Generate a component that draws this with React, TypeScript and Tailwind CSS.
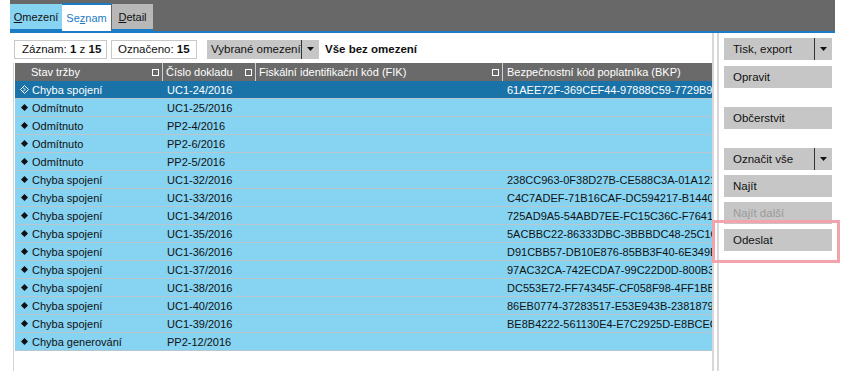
import React from 'react';

type Row = { stav: string; cislo: string; bkp: string };

const rows: Row[] = [
    { stav: 'Chyba spojení', cislo: 'UC1-24/2016', bkp: '61AEE72F-369CEF44-97888C59-7729B93E-' },
    { stav: 'Odmítnuto', cislo: 'UC1-25/2016', bkp: '' },
    { stav: 'Odmítnuto', cislo: 'PP2-4/2016', bkp: '' },
    { stav: 'Odmítnuto', cislo: 'PP2-6/2016', bkp: '' },
    { stav: 'Odmítnuto', cislo: 'PP2-5/2016', bkp: '' },
    { stav: 'Chyba spojení', cislo: 'UC1-32/2016', bkp: '238CC963-0F38D27B-CE588C3A-01A121D' },
    { stav: 'Chyba spojení', cislo: 'UC1-33/2016', bkp: 'C4C7ADEF-71B16CAF-DC594217-B14408C' },
    { stav: 'Chyba spojení', cislo: 'UC1-34/2016', bkp: '725AD9A5-54ABD7EE-FC15C36C-F76410D' },
    { stav: 'Chyba spojení', cislo: 'UC1-35/2016', bkp: '5ACBBC22-86333DBC-3BBBDC48-25C1C90' },
    { stav: 'Chyba spojení', cislo: 'UC1-36/2016', bkp: 'D91CBB57-DB10E876-85BB3F40-6E349E56' },
    { stav: 'Chyba spojení', cislo: 'UC1-37/2016', bkp: '97AC32CA-742ECDA7-99C22D0D-800B361' },
    { stav: 'Chyba spojení', cislo: 'UC1-38/2016', bkp: 'DC553E72-FF74345F-CF058F98-4FF1BBC2' },
    { stav: 'Chyba spojení', cislo: 'UC1-40/2016', bkp: '86EB0774-37283517-E53E943B-23818798-' },
    { stav: 'Chyba spojení', cislo: 'UC1-39/2016', bkp: 'BE8B4222-561130E4-E7C2925D-E8BCEC82' },
    { stav: 'Chyba generování', cislo: 'PP2-12/2016', bkp: '' },
];

const font = { fontFamily: '"Liberation Sans", Tahoma, sans-serif' };

// small square glyph in header cells
const HeadBox = () => <span className="w-[7px] h-[7px] border border-white shrink-0" />;

const Arrow = () => (
    <svg width="7" height="4" viewBox="0 0 7 4">
        <path d="M0 0h7L3.5 4z" fill="#111" />
    </svg>
);

function ToolButton({ label, split, disabled }: { label: string; split?: boolean; disabled?: boolean }) {
    return (
        <div className="flex h-[22px] w-[108px] bg-[#c6c6c6] items-center">
            <span className={`flex-1 pl-[9px] whitespace-nowrap ${disabled ? 'text-[#9a9a9a]' : 'text-[#111]'}`}>{label}</span>
            {split && (
                <>
                    <span className="w-px h-[22px] bg-[#333]" />
                    <span className="w-[17px] flex justify-center"><Arrow /></span>
                </>
            )}
        </div>
    );
}

export default function App() {
    return (
        <div className="w-[850px] h-[371px] bg-white relative overflow-hidden text-[11px] leading-[14px]" style={font}>
            <div className="ml-[10px] w-[825px]">
                {/* Tabs bar */}
                <div className="h-[31px] bg-[#686868] flex items-end pt-[4px]">
                    <div className="h-[27px] w-[52px] bg-[#87d3f2] border-b-2 border-[#1a7cc4] flex items-center justify-center text-[#111]">
                        <span><u>O</u>mezení</span>
                    </div>
                    <div className="h-[28px] w-[49px] bg-white border-t-2 border-[#1a7cc4] flex items-center justify-center text-[#1a7cc4]">
                        <span>Se<u>z</u>nam</span>
                    </div>
                    <div className="h-[27px] w-[41px] bg-[#b8b8b8] border-b-2 border-[#1a7cc4] flex items-center justify-center text-[#111] ml-px">
                        <span><u>D</u>etail</span>
                    </div>
                </div>
                <div className="h-[2px] bg-[#1a7cc4]" />

                {/* Body */}
                <div className="flex h-[338px]">
                    {/* Left section */}
                    <div className="w-[702px] flex flex-col">
                        <div className="flex items-center h-[24px] mt-[4px] pl-[4px] whitespace-nowrap text-[11.5px]">
                            <div className="h-[19px] w-[93px] border border-[#c8c8c8] flex items-center pl-[7px] text-[#111]">
                                Záznam:&nbsp;<b>1</b>&nbsp;z&nbsp;<b>15</b>
                            </div>
                            <div className="h-[19px] w-[86px] border border-[#c8c8c8] flex items-center pl-[6px] ml-[4px] text-[#111]">
                                Označeno:&nbsp;<b>15</b>
                            </div>
                            <div className="h-[19px] w-[112px] bg-[#c6c6c6] flex items-center ml-[10px]">
                                <span className="flex-1 pl-[4px] text-[#111]">Vybrané omezení</span>
                                <span className="w-px h-[19px] bg-[#333]" />
                                <span className="w-[17px] flex justify-center"><Arrow /></span>
                            </div>
                            <span className="ml-[6px] font-bold text-[#111]">Vše bez omezení</span>
                        </div>

                        <div className="flex-1 ml-[3px] border-l border-[#d4d4d4] mt-[2px] flex flex-col">
                            {/* Header */}
                            <div className="flex h-[18px] bg-[#6a6a6a] text-white ml-px whitespace-nowrap">
                                <div className="w-[148px] flex items-center pl-[16px] pr-[3px] border-r border-[#cfcfcf]">
                                    <span className="flex-1">Stav tržby</span><HeadBox />
                                </div>
                                <div className="w-[93px] flex items-center pl-[3px] pr-[3px] border-r border-[#cfcfcf]">
                                    <span className="flex-1">Číslo dokladu</span><HeadBox />
                                </div>
                                <div className="w-[247px] flex items-center pl-[3px] pr-[3px] border-r border-[#cfcfcf]">
                                    <span className="flex-1">Fiskální identifikační kód (FIK)</span><HeadBox />
                                </div>
                                <div className="flex-1 flex items-center pl-[4px]">
                                    <span>Bezpečnostní kód poplatníka (BKP)</span>
                                </div>
                            </div>

                            {/* Rows */}
                            {rows.map((r, i) => {
                                const sel = i === 0;
                                return (
                                    <div
                                        key={i}
                                        className={`flex h-[18px] ml-px border-b border-[#b8c6ce] ${sel ? 'bg-[#1a73a8] text-white' : 'bg-[#87d3f2] text-[#111]'}`}
                                    >
                                        <div className="w-[148px] flex items-center pl-[3px] overflow-hidden whitespace-nowrap">
                                            <span className="w-[13px] flex justify-center mr-px">
                                                {sel ? (
                                                    <svg width="9" height="9" viewBox="0 0 9 9">
                                                        <path d="M4.5 0.5L8.5 4.5L4.5 8.5L0.5 4.5Z" fill="none" stroke="#fff" />
                                                        <path d="M3 2.5L5 4.5L3 6.5" fill="none" stroke="#fff" />
                                                    </svg>
                                                ) : (
                                                    <svg width="7" height="7" viewBox="0 0 7 7">
                                                        <path d="M3.5 0L7 3.5L3.5 7L0 3.5Z" fill="#111" />
                                                    </svg>
                                                )}
                                            </span>
                                            <span>{r.stav}</span>
                                        </div>
                                        <div className="w-[93px] flex items-center pl-[4px] whitespace-nowrap">{r.cislo}</div>
                                        <div className="w-[247px]" />
                                        <div className="flex-1 flex items-center pl-[4px] overflow-hidden whitespace-nowrap">{r.bkp}</div>
                                    </div>
                                );
                            })}
                        </div>
                    </div>

                    {/* Splitter */}
                    <div className="w-[2px] bg-[#d8d8d8]" />
                    <div className="w-[3px]" />
                    <div className="w-[2px] bg-[#d8d8d8]" />

                    {/* Right buttons */}
                    <div className="flex flex-col pl-[5px] pt-[5px] text-[11.5px]">
                        <ToolButton label="Tisk, export" split />
                        <div className="mt-[6px]"><ToolButton label="Opravit" /></div>
                        <div className="mt-[19px]"><ToolButton label="Občerstvit" /></div>
                        <div className="mt-[19px]"><ToolButton label="Označit vše" split /></div>
                        <div className="mt-[5px]"><ToolButton label="Najít" /></div>
                        <div className="mt-[5px]"><ToolButton label="Najít další" disabled /></div>
                        <div className="mt-[5px]"><ToolButton label="Odeslat" /></div>
                    </div>
                </div>
            </div>

            {/* highlight frame */}
            <div className="absolute left-[712px] top-[220px] w-[128px] h-[43px] border-[3px] border-[#f2a3ab]" />
        </div>
    );
}
